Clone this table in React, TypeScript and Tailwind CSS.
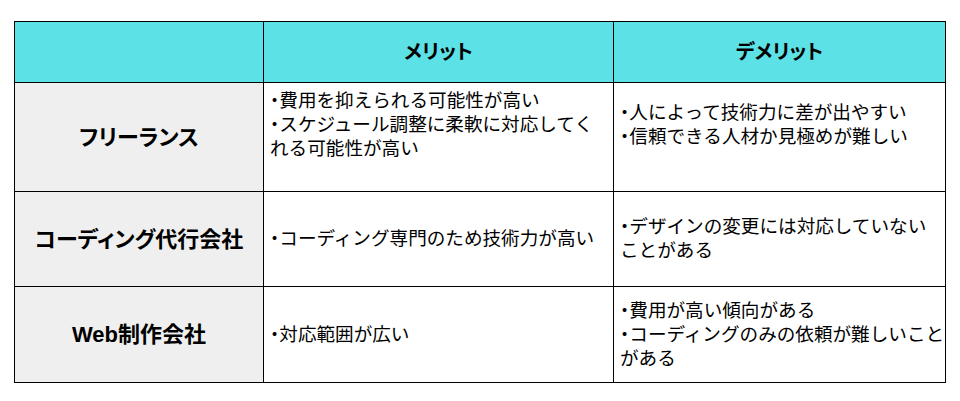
const rows = [
  {
    label: 'フリーランス',
    merit: ['・費用を抑えられる可能性が高い', '・スケジュール調整に柔軟に対応してく', 'れる可能性が高い', ''],
    demerit: ['・人によって技術力に差が出やすい', '・信頼できる人材か見極めが難しい', ''],
  },
  {
    label: 'コーディング代行会社',
    merit: ['・コーディング専門のため技術力が高い'],
    demerit: ['・デザインの変更には対応していない', 'ことがある'],
  },
  {
    label: 'Web制作会社',
    merit: ['・対応範囲が広い'],
    demerit: ['・費用が高い傾向がある', '・コーディングのみの依頼が難しいこと', 'がある'],
  },
]

function Lines({ lines }: { lines: string[] }) {
  return (
    <div className="flex h-full flex-col justify-center pl-[6px] text-[18.6px] leading-[24px] text-black whitespace-nowrap">
      {lines.map((line, i) =>
        line === '' ? (
          <div key={i}>&nbsp;</div>
        ) : line.startsWith('・') ? (
          <div key={i}>
            <span className="[font-feature-settings:'palt']">・</span>
            {line.slice(1)}
          </div>
        ) : (
          <div key={i}>{line}</div>
        )
      )}
    </div>
  )
}

export default function App() {
  return (
    <div
      className="h-[401px] w-[960px] bg-white pl-[14px] pt-[21px]"
      style={{ fontFamily: '"Liberation Sans", "Noto Sans CJK JP", sans-serif' }}
    >
      <div className="grid w-[932px] grid-cols-[248px_349px_331px] grid-rows-[60px_108px_94px_95px] gap-px bg-black p-px">
        <div className="bg-[#5ce1e6]" />
        <div className="flex items-center justify-center bg-[#5ce1e6] text-[20px] font-bold text-black [font-feature-settings:'palt']">
          メリット
        </div>
        <div className="flex items-center justify-center bg-[#5ce1e6] text-[20px] font-bold text-black [font-feature-settings:'palt']">
          デメリット
        </div>
        {rows.map((row) => (
          <>
            <div
              key={row.label + '-l'}
              className="flex items-center justify-center bg-[#efefef] text-[22px] font-bold text-black [font-feature-settings:'palt']"
            >
              {row.label}
            </div>
            <div key={row.label + '-m'} className="bg-white">
              <Lines lines={row.merit} />
            </div>
            <div key={row.label + '-d'} className="bg-white">
              <Lines lines={row.demerit} />
            </div>
          </>
        ))}
      </div>
    </div>
  )
}
